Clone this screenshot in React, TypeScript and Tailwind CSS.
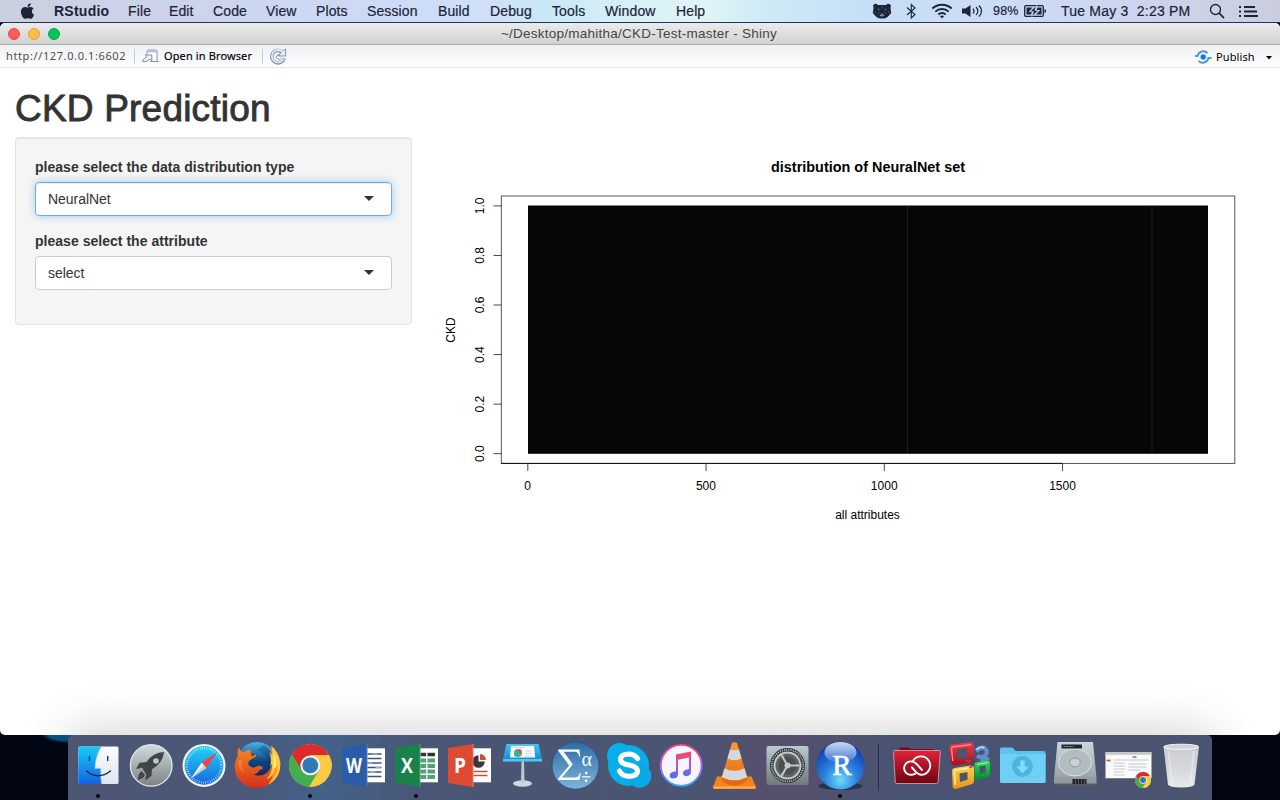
import React from "react";

const menus: [string, string][] = [
  ["File", "w-[41px]"],
  ["Edit", "w-[44px]"],
  ["Code", "w-[53px]"],
  ["View", "w-[50px]"],
  ["Plots", "w-[51px]"],
  ["Session", "w-[71px]"],
  ["Build", "w-[52px]"],
  ["Debug", "w-[62px]"],
  ["Tools", "w-[53px]"],
  ["Window", "w-[71px]"],
  ["Help", "w-[40px]"],
];

function MenuBar() {
  return (
    <div className="flex h-[23px] shrink-0 items-center border-b border-[#1c3565] bg-[linear-gradient(90deg,#cbd0de_0%,#ccd3ea_12%,#cddaf5_30%,#cfe0f7_38%,#c8e9f6_43%,#d6f0f6_49%,#e0f5f5_55%,#cdeaf6_60%,#c6def6_68%,#ccdcf6_78%,#cdd5ee_88%,#cbcddc_100%)] text-[14px] whitespace-nowrap text-[#1b2438]">
      <svg className="ml-[20px] h-[18px] w-[15px]" viewBox="0 0 384 512" fill="#1b2438">
        <path d="M318.700 268.700c-.2-36.700 16.400-64.400 50-84.800-18.800-26.900-47.200-41.700-84.700-44.600-35.500-2.800-74.300 20.700-88.500 20.700-15 0-49.400-19.700-76.400-19.700C63.300 141.200 4 184.800 4 273.500q0 39.300 14.400 81.200c12.800 36.700 59 126.700 107.200 125.200 25.200-.6 43-17.900 75.800-17.900 31.800 0 48.300 17.900 76.400 17.900 48.600-.7 90.400-82.500 102.600-119.300-65.200-30.700-61.700-90-61.700-91.900zm-56.600-164.200c27.300-32.400 24.800-61.900 24-72.500-24.100 1.400-52 16.400-67.900 34.900-17.500 19.800-27.800 44.300-25.600 71.900 26.100 2 49.900-11.400 69.500-34.300z" />
      </svg>
      <span className="ml-[19px] w-[74px] text-[14px] font-bold tracking-[0.25px]">RStudio</span>
      {menus.map(([name, width]) => (
        <span key={name} className={width + " tracking-[0.12px] [-webkit-text-stroke:0.2px]"}>{name}</span>
      ))}
      <div className="ml-auto flex h-full items-center">
        <svg width="20" height="18" viewBox="0 0 20 18">
          <path d="M1 3l3-1.500 2 1.500h8l2-1.500L19 3l-.5 3 .7 5-2.200 2.500-2 2-3 1H8l-3-1-2-2L.8 11l.7-5z" fill="#1b2438" />
          <path d="M5.500 6.500l2.500 1-1.800.6zM14.500 6.500l-2.500 1 1.800.6zM9 11l1 1 1-1M7.500 13l2.500-.8 2.500.8-1 1.300h-3z" fill="#8c98b2" />
          <path d="M10 3.500v3M4 9l-1 2M16 9l1 2M7.500 9.500l-1.500 3M12.500 9.500l1.500 3" stroke="#5f6d8b" strokeWidth=".6" />
        </svg>
        <svg className="ml-[14px]" width="11" height="18" viewBox="0 0 11 18" fill="none" stroke="#1b2438" strokeWidth="1.100">
          <path d="M1 5.500l8 7L5.300 16V2.500L9 6 1 13" />
        </svg>
        <svg className="ml-[14px]" width="22" height="18" viewBox="0 0 22 18" fill="none" stroke="#1b2438" strokeWidth="1.900">
          <path d="M1.300 6.500c5.500-5 13.900-5 19.400 0M4.300 9.600c3.900-3.500 9.500-3.500 13.400 0M7.300 12.500c2.200-1.900 5.200-1.900 7.400 0" />
          <path d="M9 14.200c1.200-.9 2.800-.9 4 0L11 16.500z" fill="#1b2438" stroke="none" />
        </svg>
        <svg className="ml-[9px]" width="23" height="18" viewBox="0 0 23 18" fill="none" stroke="#1b2438" strokeWidth="1.200">
          <path d="M0 6.500h3.500L8.500 3v12l-5-3.500H0z" fill="#1b2438" stroke="none" />
          <path d="M11 6.500c1.200 1.500 1.200 3.500 0 5M14 5c2.300 2.500 2.300 5.500 0 8M17 3.500c3.200 3.500 3.200 7.500 0 11" />
        </svg>
        <span className="ml-[8px] w-[31px] text-[12.500px] tracking-[0.2px] [-webkit-text-stroke:0.2px]">98%</span>
        <svg width="24" height="16" viewBox="0 0 24 16">
          <rect x=".7" y="2.700" width="18.600" height="10.600" rx="1.200" fill="none" stroke="#1b2438" strokeWidth="1.300" />
          <path d="M2.500 4.500h6L4.700 9H8l-1 2.500H2.500zM17.500 4.500h-4L12.500 7h3.800L12 11.500h5.500z" fill="#1b2438" />
          <path d="M12.500 2.500L5.800 8.700h3.700l-1.700 4.800 6.800-6.100h-3.800z" fill="#1b2438" stroke="#ccd6ee" strokeWidth=".7" />
          <path d="M20.500 6c2 .3 2 3.700 0 4z" fill="#1b2438" />
        </svg>
        <span className="ml-[13px] w-[148px] text-[14px] tracking-[0.22px] whitespace-pre [-webkit-text-stroke:0.2px]">Tue May 3  2:23 PM</span>
        <svg width="16" height="18" viewBox="0 0 16 18" fill="none" stroke="#1b2438" strokeWidth="1.300">
          <circle cx="6.500" cy="7.500" r="5" /><path d="M10.200 11.200l4.800 5" strokeWidth="1.700" />
        </svg>
        <svg className="mr-[22px] ml-[14px]" width="19" height="18" viewBox="0 0 19 18" fill="#1b2438">
          <path d="M0 4h2v2H0zM5 4h11v2H5zM0 8.500h2v2H0zM5 8.500h13v2H5zM0 13h2v2H0zM5 13h14v2H5z" />
        </svg>
      </div>
    </div>
  );
}

function TitleBar() {
  return (
    <div className="relative flex h-[22px] shrink-0 items-center justify-center rounded-t-[5px] border-b border-[#aaa] bg-gradient-to-b from-[#ebebeb] to-[#d2d2d2] text-[13px] text-[#454545]">
      <div className="absolute top-[5px] left-[8px] flex gap-[8px]">
        <i className="size-[12px] rounded-full border border-[#e2494a] bg-[#fc5b57]" />
        <i className="size-[12px] rounded-full border border-[#e0a13c] bg-[#fdbc4b]" />
        <i className="size-[12px] rounded-full border border-[#10a445] bg-[#00c853]" />
      </div>
      <span className="pt-[2px] pr-[2px] text-[13.500px] tracking-[0.25px]">~/Desktop/mahitha/CKD-Test-master - Shiny</span>
    </div>
  );
}

function Toolbar() {
  return (
    <div className="flex h-[23px] shrink-0 items-center border-b border-[#e3e4e5] bg-gradient-to-b from-[#eef0f2] to-[#fdfefe] font-['Noto_Sans',sans-serif] text-[11px] whitespace-nowrap text-black">
      <span className="ml-[6px] w-[128px] tracking-[0.61px] text-[#4d4d4d]">http://127.0.0.1:6602</span>
      <i className="h-[15px] w-px bg-[#c9cccf]" />
      <svg className="ml-[7px]" width="18" height="14" viewBox="0 0 18 14" fill="none">
        <path d="M5 5V2.500Q5 1 6.500 1h7Q15 1 15 2.500V11q0 1.500 1.500 1.500H8" fill="#fff" stroke="#8796ab" />
        <path d="M5.500 2.500h9" stroke="#9fc0dc" strokeWidth="1.400" />
        <path d="M.8 11l4-3.700L3.300 6h6.500v6L8 10.300l-4 2.400H.8z" fill="#e9f0f7" stroke="#7d8ea5" />
      </svg>
      <span className="ml-[4px] w-[98px] tracking-[0.12px] [-webkit-text-stroke:0.15px]">Open in Browser</span>
      <i className="h-[15px] w-px bg-[#c9cccf]" />
      <svg className="ml-[7px]" width="17" height="17" viewBox="0 0 17 17">
        <path d="M11.700 3.700A6.200 6.200 0 1 0 14 10.200" fill="none" stroke="#8595ac" strokeWidth="3.600" />
        <path d="M15.700 1v7H8.700v-1.500L11 5l1-1.500z" fill="#dfeaf5" stroke="#8595ac" />
        <path d="M12.600 4A6.200 6.200 0 1 0 13.700 10.700" fill="none" stroke="#e0ebf6" strokeWidth="1.900" />
        <path d="M10 7.200a2.300 2.300 0 1 0 .6 3" fill="none" stroke="#8595ac" />
      </svg>
      <svg className="mt-[2px] ml-auto" width="17" height="14" viewBox="0 0 17 14" fill="none" stroke="#5495d3" strokeWidth="2">
        <path d="M0 6h2.500C4 1 9.500-.2 12.500 3.200M16.500 8h-3C12 13 6.500 14 3.800 10.800" />
        <circle cx="8.200" cy="7" r="2.700" fill="#1c79dc" stroke="none" />
      </svg>
      <span className="ml-[4px] w-[50px] pt-[2px] tracking-[0.1px]">Publish</span>
      <svg className="mt-[3px] mr-[8px]" width="6" height="4" viewBox="0 0 6 4"><path d="M0 0h6L3 3.500z" /></svg>
    </div>
  );
}

function Select({ label, value, focused }: { label: string; value: string; focused?: boolean }) {
  return (
    <div className="mb-[15px]">
      <div className="mb-[5px] h-5 text-[14px] leading-5 font-bold tracking-[0.025px]">{label}</div>
      <div
        className={
          focused
            ? "flex h-[34px] items-center rounded-[4px] border border-[#66afe9] bg-white pr-[17px] pl-3 shadow-[inset_0_1px_1px_rgba(0,0,0,0.075),0_0_8px_rgba(102,175,233,0.6)]"
            : "flex h-[34px] items-center rounded-[4px] border border-[#ccc] bg-white pr-[17px] pl-3"
        }
      >
        <span className="text-[14px] tracking-[-0.04px]">{value}</span>
        <svg className="ml-auto" width="10" height="6" viewBox="0 0 10 6"><path d="M0 0h10L5 5z" fill="#333" /></svg>
      </div>
    </div>
  );
}

const yTicks = ["0.0", "0.2", "0.4", "0.6", "0.8", "1.0"];
const xTicks = ["0", "500", "1000", "1500"];

function Plot() {
  return (
    <svg width="838" height="400" viewBox="427 137 838 400" fontFamily="Liberation Sans, sans-serif" fontSize="12" textAnchor="middle">
      <text x="868" y="172" fontSize="14.400" fontWeight="bold" textLength="194">distribution of NeuralNet set</text>
      <rect x="528" y="205.500" width="680" height="248.300" fill="#060606" />
      <path d="M907.500 206v247M1152 206v247" stroke="#1c1c1c" />
      <rect x="501.300" y="196" width="733.500" height="267.400" fill="none" stroke="#444" strokeWidth=".9" />
      <path d="M501 463.400h561.600" stroke="#111" />
      {yTicks.map((t, i) => {
        const y = 453.700 - i * 49.560;
        return (
          <g key={t}>
            <path d={`M493.500 ${y}H501.500`} stroke="#333" strokeWidth=".9" />
            <text transform={`translate(483.800 ${y}) rotate(-90)`}>{t}</text>
          </g>
        );
      })}
      {xTicks.map((t, i) => {
        const x = 527.800 + i * 178.260;
        return (
          <g key={t}>
            <path d={`M${x} 463.500V471`} stroke="#333" strokeWidth=".9" />
            <text x={x - 0.100} y="490">{t}</text>
          </g>
        );
      })}
      <text transform="translate(454.700 330) rotate(-90)">CKD</text>
      <text x="867.500" y="519">all attributes</text>
    </svg>
  );
}

function Defs() {
  const g = (id: string, a: string, b: string, mid?: string) => (
    <linearGradient id={id} x1="0" y1="0" x2="0" y2="1">
      <stop offset="0" stopColor={a} />
      {mid && <stop offset=".5" stopColor={mid} />}
      <stop offset="1" stopColor={b} />
    </linearGradient>
  );
  return (
    <svg className="absolute size-0">
      <defs>
        {g("finder", "#15cdf8", "#1263e6")}
        {g("paper", "#fbfbfd", "#dfe5ef")}
        {g("launch", "#cfdcdf", "#7d8181")}
        {g("safari", "#1fd3fb", "#1969dd")}
        {g("fox", "#f38a24", "#d92e1b")}
        {g("globe", "#45b4e6", "#0a2558", "#0b4382")}
        {g("key", "#43c5f4", "#148fd2")}
        {g("sigma", "#2f6ca5", "#7fb3da")}
        {g("tune", "#f9475b", "#4272ee", "#b558cf")}
        {g("ring", "#f7437d", "#31a8f5", "#b957ee")}
        {g("sys", "#b9cbd0", "#71797b")}
        {g("gloss", "#ffffff", "#3c75da")}
        {g("cc", "#de2338", "#6e0412")}
        {g("disk", "#cad6da", "#98a3a8")}
        {g("trash", "#d3d5d9", "#f1f2f4", "#dcdee2")}
        {g("cone", "#fb9c36", "#e26410")}
        {g("ored", "#ef3b48", "#a80f1f")}
        {g("oyel", "#fdd548", "#e89212")}
        {g("ogrn", "#2bdc5a", "#058a2d")}
        <radialGradient id="rball" cx=".5" cy=".8" r=".75">
          <stop offset="0" stopColor="#6cdaf8" /><stop offset=".45" stopColor="#2b83e0" /><stop offset="1" stopColor="#0d3fae" />
        </radialGradient>
      </defs>
    </svg>
  );
}

function ChromeMark() {
  return (
    <g>
      <circle r="21.300" fill="#fbca43" />
      <path d="M-18.500-10.700A21.300 21.300 0 0 1 18.700-10.200H0L-8.800 5.100z" fill="#dd2b2b" />
      <path d="M-18.500-10.700A21.300 21.300 0 0 0-1 21.300L8.800 5.100-8.800 5.100z" fill="#43ad52" />
      <path d="M8.800 5.100L-1 21.300A21.300 21.300 0 0 0 18.700-10.200H0z" fill="#fbca43" />
      <circle r="9.900" fill="#f2f5f7" />
      <circle r="7.900" fill="#3379b8" />
    </g>
  );
}

function Office({ door, letter, side, children }: { door: string; letter: string; side: string; children: React.ReactNode }) {
  return (
    <>
      <path d="M29 13.300h19.500v34H29z" fill="#fff" />
      {children}
      <path d="M5.500 13L30.500 9v43L5.500 48z" fill={door} />
      <path d="M30.500 9v43" stroke={side} strokeWidth="1" />
      <text x="17.500" y="38" fontSize="21" fontWeight="bold" textAnchor="middle" fill="#fff" textLength={letter === "W" ? 16 : 12} lengthAdjust="spacingAndGlyphs" fontFamily="Open Sans, sans-serif">{letter}</text>
    </>
  );
}

const apps: { name: string; running?: boolean; art: React.ReactNode }[] = [
  {
    name: "Finder", running: true,
    art: (
      <>
        <rect x="6.800" y="11.500" width="40.200" height="37.500" rx="1.500" fill="url(#paper)" />
        <path d="M8 11.500h22Q24 20 23.400 33.500h5.800Q29 42 30 49H8q-1.200 0-1.200-1.500V13Q6.800 11.500 8 11.500z" fill="url(#finder)" />
        <path d="M30 11.500Q24 20 23.400 33.500h5.800Q29 42 30 49" fill="none" stroke="#9cc2ea" strokeWidth=".7" />
        <path d="M18 21.500v4M36.200 21.500v4M15 36q11.500 9.500 24 0" fill="none" stroke="#15243b" strokeWidth="1.300" strokeLinecap="round" />
      </>
    ),
  },
  {
    name: "Launchpad",
    art: (
      <>
        <circle cx="26.700" cy="30.400" r="20.800" fill="url(#launch)" stroke="#dfe7e8" strokeWidth="1.300" />
        <path d="M39.500 17q-11 .5-17.500 10l-7 .8-3.500 6.200 6-1.300 4.300 7-1.300 6 6.500-5 .5-6.500Q38.500 28 39.500 17zM17 36l3.500 4-2 3-5.500 2 1.500-6z" fill="#404548" />
        <circle cx="31.500" cy="26" r="2.800" fill="#bfc9cb" />
      </>
    ),
  },
  {
    name: "Safari",
    art: (
      <>
        <circle cx="26.500" cy="30.400" r="21.500" fill="#f1f3f5" />
        <circle cx="26.500" cy="30.400" r="19.300" fill="url(#safari)" />
        <circle cx="26.500" cy="30.400" r="17.200" fill="none" stroke="#d9f4ff" strokeWidth="2.400" strokeDasharray=".6 1.650" />
        <path d="M39.500 17.500L24.200 27.500l4.600 5.500z" fill="#fa3f3c" />
        <path d="M13.500 43.300L24.200 27.500l4.600 5.500z" fill="#f4f4f4" />
        <path d="M13.500 43.300L26.500 30.300l2.300 2.700z" fill="#c9ccd0" />
      </>
    ),
  },
  {
    name: "Firefox",
    art: (
      <>
        <circle cx="26.500" cy="26.800" r="19.800" fill="url(#globe)" />
        <path d="M33 10q6 3 7 8l3 14-8 6q5-8 1-15-3-6-9-8z" fill="#0b2c63" opacity=".3" />
        <path d="M8.200 12.500Q9 15 12.500 17.300 17 14.800 20.500 14.300L20 18l5.500 1.700q.8 2.300-2.500 3.300l-4 2.500q-2 2.500-.5 5 2.500 3 6.500 1.500 5-2.500 7.500.5.500 2-3 2.300-2.500 4-6.500 4.700 9.500 3.500 15.500-4 5-7 3-15-1-5.500-3.500-9Q48 19.500 49.700 28q1 11-6.500 18-8 7-17.500 7T8.500 45Q4 38.500 4.200 31q.4-6 3-9.500Q6.500 16 8.200 12.500z" fill="url(#fox)" />
        <path d="M40.500 10.500Q48.500 17 49.700 27q.8 10-5 17-3 3.500-7.500 6 4.500-5 5.500-10.500-3 3.500-7 5 6.500-7 5.800-15.500l-2 3q2-8-.5-15l3 3.500q0-5-1.500-10z" fill="#fcc93c" />
        <path d="M42.500 16q4 7 2.500 16l-2 2q1-9-.5-18z" fill="#fff0a6" />
        <path d="M47 30q0 12-9 19 5-8 5.500-14z" fill="#f08a28" opacity=".8" />
        <path d="M12 24q-3 8 3 14-8-3-7-12z" fill="#f9a13a" opacity=".45" />
        <path d="M20 18.500l4.500 1-2.500 1.500z" fill="#5b1d10" />
      </>
    ),
  },
  { name: "Chrome", running: true, art: <g transform="translate(26.800 30.400)"><ChromeMark /></g> },
  {
    name: "Word",
    art: (
      <Office door="#2a5caa" side="#4a7cc6" letter="W">
        <path d="M31 19h14M31 23.500h14M31 28h14M31 32.500h14M31 37h14M31 41.500h14" stroke="#42546f" strokeWidth="1.500" />
        <path d="M36 19h5M31 28h5M39 32.500h5M33 37h6" stroke="#8fb1e6" strokeWidth="1.600" />
      </Office>
    ),
  },
  {
    name: "Excel", running: true,
    art: (
      <Office door="#18824a" side="#3da76b" letter="X">
        <path d="M31 19.500h14.500" stroke="#353535" strokeWidth="3.500" />
        <path d="M31 25.500h14.500M31 31h14.500M31 36.500h14.500M31 42h14.500" stroke="#51a377" strokeWidth="3.800" />
        <path d="M37.300 16v29" stroke="#fff" strokeWidth="1.300" />
      </Office>
    ),
  },
  {
    name: "PowerPoint",
    art: (
      <Office door="#df4a32" side="#f2735b" letter="P">
        <circle cx="36" cy="26.500" r="6.300" fill="#373737" />
        <path d="M36 26.500v-7h7v7z" fill="#fff" />
        <path d="M37.500 25v-6q5.500.5 6 6z" fill="#c5513f" />
        <path d="M31 36.500h14M31 40.500h14" stroke="#d24b3a" strokeWidth="1.300" />
      </Office>
    ),
  },
  {
    name: "Keynote",
    art: (
      <>
        <ellipse cx="27" cy="48.500" rx="9.500" ry="3.300" fill="#cbd9e2" />
        <path d="M26 26h2.500l.5 22h-3.500z" fill="#b9cbd6" />
        <path d="M11 9h32l3.500 15H7.500z" fill="url(#key)" />
        <path d="M7.500 24h39v2.500h-39z" fill="#55c4f1" />
        <path d="M15.500 11h23l1.200 11.500H14.500z" fill="#f7fbfd" />
        <circle cx="22.500" cy="18" r="4" fill="#49b955" />
        <path d="M22.500 18v-4a4 4 0 0 1 4 4z" fill="#e54a74" /><path d="M18.500 18a4 4 0 0 0 4 4v-4z" fill="#2ba4e5" />
        <path d="M17 12.500h13M30 16h6M30 18.500h6M30 21h6" stroke="#c7ced4" strokeWidth=".8" />
      </>
    ),
  },
  {
    name: "Grapher",
    art: (
      <g fontFamily="Liberation Serif, serif" fill="#f7fbff">
        <circle cx="27" cy="30.700" r="23.500" fill="url(#sigma)" stroke="#275a8d" />
        <path d="M9.500 14.500H31l.7 7h-1q-.8-4.800-4.500-4.800H15.300l9 12.800-11 13h13q4 0 5-4.500h1l-1.300 7H9.500v-1.200L20.700 30.500 9.500 15.500z" />
        <text x="33" y="31" fontSize="20">α</text>
        <path d="M33.500 41.200h8.500v1.300h-8.500z" />
        <circle cx="37.700" cy="38" r="1.300" /><circle cx="37.700" cy="45.700" r="1.300" />
      </g>
    ),
  },
  {
    name: "Skype",
    art: (
      <>
        <circle cx="27" cy="30.400" r="20.500" fill="#08aeea" />
        <circle cx="18" cy="20.500" r="12.500" fill="#08aeea" /><circle cx="38" cy="41" r="11.800" fill="#08a9e5" />
        <path d="M36 23.500q-3-4.500-9-4.500-8 .3-8 5.500 0 4 8.500 5.500 8.500 1.600 8.500 6 0 5-8.500 5.300-7 0-9.500-5.300" fill="none" stroke="#fff" strokeWidth="5.200" strokeLinecap="round" />
      </>
    ),
  },
  {
    name: "iTunes",
    art: (
      <>
        <circle cx="26.700" cy="30.400" r="20.500" fill="#f5f5fb" stroke="url(#ring)" strokeWidth="1.900" />
        <path d="M21.500 19.500L36.500 16.500v20.300q0 4-4.500 4.300-3.500 0-3.500-2.800 0-3.300 4-3.800l2-.5V22.500l-11 2.300V39q0 4-4.500 4.500-3.800 0-3.800-3 0-3.200 4-3.800l2.300-.5z" fill="url(#tune)" />
      </>
    ),
  },
  {
    name: "VLC",
    art: (
      <>
        <path d="M9.500 41.500h34.500l4.500 10.500q0 2-1.500 2H7q-1.500 0-1.500-2z" fill="#f3851e" />
        <path d="M6 51.500h42v2H6z" fill="#ffb242" />
        <path d="M24.500 8q2.500-1.500 5 0l11 37q-6 5.500-13.500 5.500T13.500 45z" fill="url(#cone)" />
        <path d="M22.600 14.300q4.400 2 8.800 0l2.700 9.200q-7.100 3.500-14.200 0zM17 33.300q10 5 20 0l2.700 8.900q-12.700 6-25.400 0z" fill="#d5d9dd" />
      </>
    ),
  },
  {
    name: "Settings",
    art: (
      <>
        <rect x="6" y="11" width="42" height="39" rx="2" fill="url(#sys)" />
        <circle cx="27" cy="30.500" r="17.500" fill="#303335" />
        <circle cx="27" cy="30.500" r="15.800" fill="none" stroke="#b5babc" strokeWidth="1.800" strokeDasharray="1.200 1" />
        <circle cx="27" cy="30.500" r="13" fill="#5e6264" stroke="#c4c8c9" strokeWidth="2" />
        <circle cx="27" cy="30.500" r="9" fill="#4b4e50" />
        <path d="M27 30.500L21 20M27 30.500H39M27 30.500L21 41" stroke="#c4c8c9" strokeWidth="2" />
        <circle cx="27" cy="30.500" r="3" fill="#c4c8c9" />
      </>
    ),
  },
  {
    name: "RStudio", running: true,
    art: (
      <>
        <ellipse cx="27" cy="51" rx="22" ry="4" fill="#26334d" />
        <circle cx="27" cy="30.500" r="24" fill="url(#rball)" />
        <ellipse cx="27" cy="17.500" rx="16" ry="10.500" fill="url(#gloss)" opacity=".8" />
        <text x="28.500" y="39.500" fontSize="29" textAnchor="middle" fill="#fff" stroke="#fff" strokeWidth=".6" fontFamily="Liberation Serif, serif">R</text>
      </>
    ),
  },
];

const places: { name: string; art: React.ReactNode }[] = [
  {
    name: "Creative Cloud",
    art: (
      <>
        <path d="M10 16v-2.500q0-1 1-1h8l2 1.500h23v3z" fill="#760716" />
        <path d="M5 15.500h45q1 0 .9 1L48.500 47q-.2 1.500-1.500 1.500H7.500Q6 48.500 5.800 47L4 16.500q0-1 1-1z" fill="url(#cc)" stroke="#e3a8ab" strokeWidth=".8" />
        <path d="M25.500 38.800Q23.500 39.800 21.300 39.800A6.700 6.700 0 0 1 21.300 26.400Q25 26.400 28 30L32.500 35M23.500 26A9.200 9.200 0 1 1 31.500 39.800Q28.500 39.500 26 36.500L22.500 32.500" fill="none" stroke="#fff" strokeWidth="1.900" strokeLinecap="round" />
      </>
    ),
  },
  {
    name: "Office",
    art: (
      <g fillRule="evenodd" strokeLinejoin="round">
        <path d="M33.500 16q5-5 9-2.500 4 4-.5 7.500-4 2.500-7.500-.5M38 24.500q5 1.500 8-2" fill="none" stroke="#5c8fce" strokeWidth="4.200" />
        <path d="M34 14.500q4-3.500 8-1.800" fill="none" stroke="#b9d6f5" strokeWidth="1.800" />
        <path d="M32.500 27.500l13-2q2 0 2 2v12q0 2-2 2.500l-11.500 3q-2 .3-2-2V29.500zM37 31.500v7.500l6-1.300v-7z" fill="url(#ogrn)" />
        <path d="M9 9.500l19-2.300q3 0 3.300 3v14q-.3 3-3 3.500L12 30.500q-3 0-3.500-2.500L6.500 13q0-3 2.500-3.500zM14 14.500l1 9.500 9.500-1.300V13z" fill="url(#ored)" />
        <path d="M9.500 12l18.500-2.200M9 13.500l1.300 12" stroke="#ff8b90" strokeWidth="1.400" fill="none" strokeLinecap="round" />
        <path d="M12 33l16.500-2.500q3 0 3 2.700V46q0 2.500-2.500 3.300L13.500 54q-3 .5-3.300-2.200L9.500 36q0-2.500 2.500-3zM17 38.500l.4 8.500 7.600-2.300V37z" fill="url(#oyel)" />
        <path d="M12.500 35.300l15.500-2.500M12 37l.8 12.500" stroke="#fff0a0" strokeWidth="1.400" fill="none" strokeLinecap="round" />
        <path d="M35 29.300l10-1.600" stroke="#9bf5b0" strokeWidth="1.200" strokeLinecap="round" />
        <path d="M25 23.500l6 6.500M31 23l-2 8M25 30l9-4" stroke="#47455f" strokeWidth="1.200" />
        <path d="M23 25l3.500 2 2-2M27 33l3-2" stroke="#de2b38" strokeWidth="1.800" fill="none" />
      </g>
    ),
  },
  {
    name: "Downloads",
    art: (
      <>
        <path d="M4.500 17v-3q0-1.500 1.500-1.500h10.500q1 0 2 1.500l1.500 2h28q2 0 2 2v5h-45.500z" fill="#5cc3ea" />
        <path d="M4.500 19h45.700v27.500q0 1.500-1.500 1.500H6q-1.500 0-1.500-1.500z" fill="#6fd0f5" />
        <circle cx="27" cy="31.500" r="10.400" fill="#4cb5dd" />
        <path d="M24.800 25.500h4.400v6h4L27 38.500l-6.200-7h4z" fill="#81dbf9" />
      </>
    ),
  },
  {
    name: "Disk",
    art: (
      <>
        <path d="M9 7h35.500L48 43H5.500z" fill="url(#disk)" />
        <path d="M5.500 43H48v7q0 1-1 1H6.500q-1 0-1-1z" fill="#545a5e" /><path d="M5.500 42.500H48v6H5.500z" fill="#929ca0" />
        <ellipse cx="26.500" cy="27.500" rx="16.500" ry="13.500" fill="#b2bdc1" stroke="#dbe2e4" />
        <ellipse cx="26.500" cy="27.500" rx="5.300" ry="4.400" fill="#ccd3d6" stroke="#8d989c" />
        <path d="M13 9.500h20.500v4H13z" fill="#25282a" /><path d="M24 44h14v5H24z" fill="#1f2224" />
        <path d="M15 11.500h10" stroke="#959b9e" strokeWidth="1" strokeDasharray="2 1" />
        <path d="M27 44v5M30 44v5M33 44v5M36 44v5" stroke="#656b6e" strokeWidth=".8" />
      </>
    ),
  },
  {
    name: "Window",
    art: (
      <>
        <path d="M4 17.300h46v26H4z" fill="#fafafa" />
        <path d="M4 17.300h46v2.500H4z" fill="#c6c6c6" /><path d="M5 25.500h4" stroke="#df4c3e" strokeWidth="1.800" />
        <path d="M31 22h4" stroke="#4a8af4" strokeWidth="1.600" />
        <path d="M12 25h35M12 28h11M12 31h12M12 34h12M12 37h10M12 40h11M27 29h18M27 32h18M27 35h12" stroke="#c3c4c6" strokeWidth=".9" />
        <g transform="translate(41.500 45) scale(.375)"><ChromeMark /></g>
      </>
    ),
  },
  {
    name: "Trash",
    art: (
      <>
        <path d="M9 11.500h35.500L40 49.500q-1 3-13.200 3T13.500 49.500z" fill="url(#trash)" opacity=".94" />
        <ellipse cx="26.700" cy="11.800" rx="17.400" ry="2.600" fill="#cfd2d8" stroke="#f6f7f9" strokeWidth="1" />
        <path d="M14 16l3.500 32M39.500 16L36 48" stroke="#fff" strokeWidth="2" opacity=".35" />
      </>
    ),
  },
];

function DockItem({ art, running }: { art: React.ReactNode; running?: boolean }) {
  return (
    <svg className="h-[65px] w-[53px] shrink-0" viewBox="0.5 0 53 65">
      {art}
      {running && <circle cx="26.500" cy="61" r="2" fill="#050608" />}
    </svg>
  );
}

export default function App() {
  return (
    <div className="flex h-[800px] w-[1280px] flex-col overflow-hidden bg-[#020713] font-['Liberation_Sans',Arial,sans-serif]">
      <Defs />
      <MenuBar />
      <div className="flex h-[712px] shrink-0 flex-col overflow-hidden rounded-[5px] bg-white text-[#333]">
        <TitleBar />
        <Toolbar />
        <h2 className="mt-[20px] mb-[9px] ml-[15px] h-[40px] text-[37px] leading-[41px] tracking-[0.2px] [-webkit-text-stroke:0.9px]">CKD Prediction</h2>
        <div className="flex items-start gap-[15px] pl-[15px]">
          <div className="h-[188px] w-[397px] rounded-[4px] border border-[#e3e3e3] bg-[#f5f5f5] p-[19px] shadow-[inset_0_1px_1px_rgba(0,0,0,0.05)]">
            <Select label="please select the data distribution type" value="NeuralNet" focused />
            <Select label="please select the attribute" value="select" />
          </div>
          <Plot />
        </div>
      </div>
      <div className="relative flex h-[65px] shrink-0 justify-center bg-[radial-gradient(ellipse_25px_9px_at_66px_-1px,#0a5288_70%,transparent_100%)]">
        <div className="flex h-[65px] w-[1144px] rounded-t-[5px] bg-[linear-gradient(90deg,#4c5572_0%,#4b587a_16%,#43628a_22%,#4a5675_31%,#4b5473_55%,#574f6c_62%,#4a5472_72%,#4a5370_100%)] pl-[4px] shadow-[0_0_50px_rgba(0,0,0,0.22)]">
          {apps.map((a) => <DockItem key={a.name} art={a.art} running={a.running} />)}
          <div className="flex w-[23px] shrink-0 justify-center pt-[9px]"><i className="h-[47px] w-px bg-[#252e46]" /></div>
          {places.map((p) => <DockItem key={p.name} art={p.art} />)}
        </div>
      </div>
    </div>
  );
}
